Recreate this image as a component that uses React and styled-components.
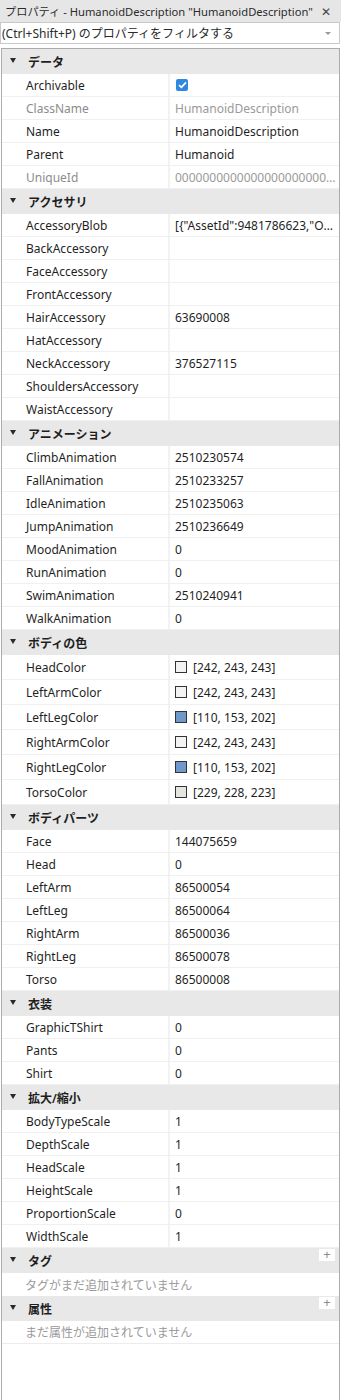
import React from "react";
import styled, { createGlobalStyle } from "styled-components";

const GlobalStyle = createGlobalStyle`
  html, body { margin: 0; padding: 0; background: #ffffff; }
  body { font-family: "Noto Sans", "Noto Sans CJK JP", sans-serif; font-size: 12px; color: #1f1f1f; }
  * { box-sizing: border-box; }
`;

const Page = styled.div`
  display: flex;
  flex-direction: column;
  min-height: 1400px;
  width: 341px;
`;

const TitleBar = styled.div`
  height: 22px;
  background: #e6e6e6;
  display: flex;
  align-items: center;
  justify-content: space-between;
  padding: 0 10px 0 5px;
  font-size: 11.2px;
  color: #2b2b2b;
  white-space: nowrap;
`;

const CloseX = styled.span`
  font-size: 12px;
  color: #444;
`;

const Filter = styled.div`
  height: 22px;
  margin: 0 1px 0 0;
  border: 1px solid #c9c9c9;
  background: #fff;
  display: flex;
  align-items: center;
  justify-content: space-between;
  padding: 0 8px 0 1px;
  color: #2b2b2b;
  font-size: 12px;
`;

const Caret = styled.span`
  width: 0;
  height: 0;
  border-left: 3px solid transparent;
  border-right: 3px solid transparent;
  border-top: 3px solid #9a9a9a;
`;

const Panel = styled.div`
  flex: 1;
  margin: 4px 1px 0 1px;
  border: 1px solid #ababab;
  border-bottom: none;
  background: #fff;
  display: flex;
  flex-direction: column;
`;

const Header = styled.div`
  height: 25px;
  background: #e8e8e8;
  display: flex;
  align-items: center;
  position: relative;
  padding-left: 8px;
  font-weight: 600;
  color: #1e1e1e;
  font-size: 12px;
`;

const Tri = styled.span`
  width: 0;
  height: 0;
  border-left: 3.5px solid transparent;
  border-right: 3.5px solid transparent;
  border-top: 5px solid #2a2a2a;
  margin-right: 12px;
  margin-top: -2px;
`;

const AddButton = styled.span`
  position: absolute;
  right: 4px;
  top: 1px;
  width: 16px;
  height: 12px;
  background: #fff;
  color: #8a8a8a;
  font-size: 13px;
  line-height: 11px;
  text-align: center;
  font-weight: 400;
`;

const Row = styled.div`
  display: grid;
  grid-template-columns: 168px 1fr;
  height: ${(p) => (p.$tall ? 25 : 23)}px;
  border-bottom: 1px solid #f0f0f0;
`;

const Label = styled.div`
  padding-left: 24px;
  display: flex;
  align-items: center;
  border-right: 2px solid #f2f2f2;
  color: ${(p) => (p.$dim ? "#8c8c8c" : "#1f1f1f")};
  white-space: nowrap;
  overflow: hidden;
`;

const Value = styled.div`
  padding: 0 2px 0 5px;
  display: flex;
  align-items: center;
  gap: 6px;
  min-width: 0;
  color: ${(p) => (p.$dim ? "#9a9a9a" : "#1f1f1f")};
`;

const ValueText = styled.span`
  white-space: nowrap;
  overflow: hidden;
  text-overflow: ellipsis;
  min-width: 0;
`;

const Check = styled.span`
  width: 12px;
  height: 12px;
  border-radius: 2px;
  background: #2f88e0;
  display: inline-flex;
  align-items: center;
  justify-content: center;
  margin-left: 1px;
`;

const Swatch = styled.span`
  width: 12px;
  height: 12px;
  border: 1px solid #333;
  background: ${(p) => p.$c};
  flex: none;
`;

const Empty = styled.div`
  height: 23px;
  display: flex;
  align-items: center;
  padding-left: 23px;
  color: #9a9a9a;
  border-bottom: ${(p) => (p.$line ? "1px solid #ececec" : "none")};
`;

const sections = [
  {
    title: "データ",
    rows: [
      { k: "Archivable", check: true },
      { k: "ClassName", v: "HumanoidDescription", dim: true },
      { k: "Name", v: "HumanoidDescription" },
      { k: "Parent", v: "Humanoid" },
      { k: "UniqueId", v: "000000000000000000000000000000000", dim: true },
    ],
  },
  {
    title: "アクセサリ",
    rows: [
      { k: "AccessoryBlob", v: '[{"AssetId":9481786623,"Order":1,"AccessoryType":"Hair"}]' },
      { k: "BackAccessory", v: "" },
      { k: "FaceAccessory", v: "" },
      { k: "FrontAccessory", v: "" },
      { k: "HairAccessory", v: "63690008" },
      { k: "HatAccessory", v: "" },
      { k: "NeckAccessory", v: "376527115" },
      { k: "ShouldersAccessory", v: "" },
      { k: "WaistAccessory", v: "" },
    ],
  },
  {
    title: "アニメーション",
    rows: [
      { k: "ClimbAnimation", v: "2510230574" },
      { k: "FallAnimation", v: "2510233257" },
      { k: "IdleAnimation", v: "2510235063" },
      { k: "JumpAnimation", v: "2510236649" },
      { k: "MoodAnimation", v: "0" },
      { k: "RunAnimation", v: "0" },
      { k: "SwimAnimation", v: "2510240941" },
      { k: "WalkAnimation", v: "0" },
    ],
  },
  {
    title: "ボディの色",
    rows: [
      { k: "HeadColor", c: [242, 243, 243] },
      { k: "LeftArmColor", c: [242, 243, 243] },
      { k: "LeftLegColor", c: [110, 153, 202] },
      { k: "RightArmColor", c: [242, 243, 243] },
      { k: "RightLegColor", c: [110, 153, 202] },
      { k: "TorsoColor", c: [229, 228, 223] },
    ],
  },
  {
    title: "ボディパーツ",
    rows: [
      { k: "Face", v: "144075659" },
      { k: "Head", v: "0" },
      { k: "LeftArm", v: "86500054" },
      { k: "LeftLeg", v: "86500064" },
      { k: "RightArm", v: "86500036" },
      { k: "RightLeg", v: "86500078" },
      { k: "Torso", v: "86500008" },
    ],
  },
  {
    title: "衣装",
    rows: [
      { k: "GraphicTShirt", v: "0" },
      { k: "Pants", v: "0" },
      { k: "Shirt", v: "0" },
    ],
  },
  {
    title: "拡大/縮小",
    rows: [
      { k: "BodyTypeScale", v: "1" },
      { k: "DepthScale", v: "1" },
      { k: "HeadScale", v: "1" },
      { k: "HeightScale", v: "1" },
      { k: "ProportionScale", v: "0" },
      { k: "WidthScale", v: "1" },
    ],
  },
];

function PropRow({ r }) {
  return (
    <Row $tall={!!r.c}>
      <Label $dim={r.dim}>{r.k}</Label>
      <Value $dim={r.dim}>
        {r.check && (
          <Check>
            <svg width="9" height="8" viewBox="0 0 9 8">
              <path d="M1 4.2 L3.4 6.4 L8 1.4" fill="none" stroke="#fff" strokeWidth="1.6" />
            </svg>
          </Check>
        )}
        {r.c && <Swatch $c={`rgb(${r.c.join(",")})`} />}
        {r.c && <ValueText>[{r.c.join(", ")}]</ValueText>}
        {r.v !== undefined && <ValueText>{r.v}</ValueText>}
      </Value>
    </Row>
  );
}

export default function App() {
  return (
    <Page>
      <GlobalStyle />
      <TitleBar>
        <span>プロパティ - HumanoidDescription "HumanoidDescription"</span>
        <CloseX>✕</CloseX>
      </TitleBar>
      <Filter>
        <span>(Ctrl+Shift+P) のプロパティをフィルタする</span>
        <Caret />
      </Filter>
      <Panel>
        {sections.map((s) => (
          <React.Fragment key={s.title}>
            <Header>
              <Tri />
              {s.title}
            </Header>
            {s.rows.map((r) => (
              <PropRow key={r.k} r={r} />
            ))}
          </React.Fragment>
        ))}
        <Header>
          <Tri />
          タグ
          <AddButton>+</AddButton>
        </Header>
        <Empty>タグがまだ追加されていません</Empty>
        <Header>
          <Tri />
          属性
          <AddButton>+</AddButton>
        </Header>
        <Empty $line>まだ属性が追加されていません</Empty>
      </Panel>
    </Page>
  );
}
